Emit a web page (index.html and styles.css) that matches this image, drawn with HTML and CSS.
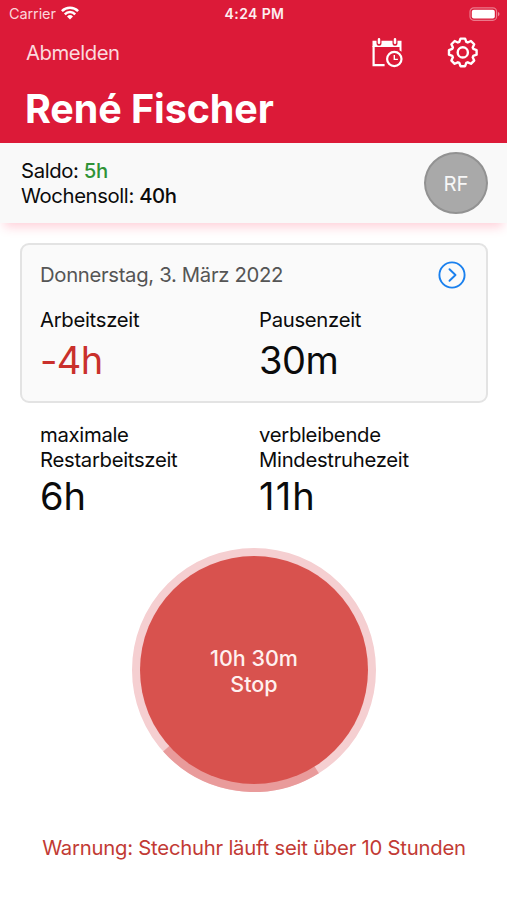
FILE: index.html
```html
<!DOCTYPE html>
<html lang="de">
<head>
<meta charset="utf-8">
<meta name="viewport" content="width=device-width, initial-scale=1">
<title>Stechuhr</title>
<link rel="stylesheet" href="styles.css">
</head>
<body>
<header class="header">
  <div class="status">
    <div class="carrier">
      <span>Carrier</span>
      <svg class="wifi" viewBox="0 0 18 14" width="18" height="14" fill="none" stroke="#fff" stroke-width="2.5">
        <path d="M.9 5.200a11.500 11.500 0 0 1 16.200 0"/>
        <path d="M3.800 8.300a7.300 7.300 0 0 1 10.400 0"/>
        <path d="M9 13.600 6 10.500a4.300 4.300 0 0 1 6 0z" fill="#fff" stroke="none"/>
      </svg>
    </div>
    <div class="clock">4:24 PM</div>
    <svg class="battery" viewBox="0 0 31 14" width="31" height="14">
      <rect x="1" y=".9" width="26.600" height="12.400" rx="3.800" fill="none" stroke="#fff" stroke-opacity=".42" stroke-width="1.200"/>
      <rect x="2.800" y="2.700" width="23" height="8.800" rx="2" fill="#fff"/>
      <path d="M29 5v4.200q1.500-.6 1.500-2.100T29 5z" fill="#fff" fill-opacity=".5"/>
    </svg>
  </div>
  <nav class="nav">
    <a class="logout">Abmelden</a>
    <div class="actions">
      <svg viewBox="0 0 32 32" width="32" height="32" fill="none" stroke="#fff">
        <path d="M2.600 9v19.200h11" stroke-width="2.200"/>
        <path d="M1.500 3.800h29v11l-2-1.600V10H1.500z" fill="#fff" stroke="none"/>
        <path d="M8 3.200v3M24 3.200v3" stroke="#dc1a38" stroke-width="5" stroke-linecap="round"/>
        <path d="M8 2.200v3.600M24 2.200v3.600" stroke-width="2.500" stroke-linecap="round"/>
        <circle cx="23.300" cy="22" r="7.200" stroke-width="2.200"/>
        <path d="M23.300 18v4.400h3.600" stroke-width="1.400"/>
      </svg>
      <svg viewBox="-16 -16 32 32" width="32" height="32" fill="none" stroke="#fff" stroke-width="2.400" stroke-linejoin="round">
        <g transform="translate(-.2 -.6)">
          <path d="M-3.500-10.500-2.300-13.800H2.300L3.500-10.500 4.950-9.900 8.130-11.380 11.380-8.130 9.900-4.950 10.500-3.500 13.800-2.300V2.300L10.500 3.500 9.900 4.950 11.380 8.130 8.130 11.380 4.950 9.900 3.500 10.500 2.300 13.800H-2.300L-3.500 10.500-4.950 9.900-8.130 11.380-11.380 8.130-9.900 4.950-10.500 3.500-13.800 2.300V-2.300L-10.500-3.500-9.900-4.950-11.380-8.130-8.130-11.380-4.950-9.900z"/>
          <circle r="5.100"/>
        </g>
      </svg>
    </div>
  </nav>
  <h1 class="name">René Fischer</h1>
</header>

<section class="summary">
  <div class="balance">
    <div>Saldo: <span class="positive">5h</span></div>
    <div>Wochensoll: <span class="target">40h</span></div>
  </div>
  <div class="avatar">RF</div>
</section>

<main class="content">
  <section class="day">
    <div class="day-head">
      <span class="date">Donnerstag, 3. März 2022</span>
      <svg viewBox="0 0 28 28" width="28" height="28" fill="none" stroke="#1a80ee" stroke-width="1.900">
        <circle cx="14" cy="14" r="12.600"/>
        <path d="M11.500 8.200l6 5.800-6 5.800" stroke-linecap="round" stroke-linejoin="round"/>
      </svg>
    </div>
    <div class="grid">
      <div><div class="label">Arbeitszeit</div><div class="value negative">-4h</div></div>
      <div><div class="label">Pausenzeit</div><div class="value minutes">30m</div></div>
    </div>
  </section>
  <section class="grid limits">
    <div><div class="label">maximale<br>Restarbeitszeit</div><div class="value">6h</div></div>
    <div><div class="label">verbleibende<br>Mindestruhezeit</div><div class="value rest">11h</div></div>
  </section>
  <button class="stop">
    <svg class="ring" viewBox="-122 -122 244 244" width="244" height="244" fill="none" stroke-width="9">
      <circle r="117.500" stroke="#f5cfd1"/>
      <path d="M62.500 99.500A117.500 117.500 0 0 1-87.500 78.400" stroke="#e99b9b"/>
      <circle r="114" fill="#d8524e"/>
    </svg>
    <span class="stop-text">10h 30m<br>Stop</span>
  </button>
  <p class="warning">Warnung: Stechuhr läuft seit über 10 Stunden</p>
</main>
</body>
</html>
```
FILE: styles.css
```css
* { box-sizing: border-box; }

body {
  margin: 0;
  width: 507px;
  height: 900px;
  overflow: hidden;
  background: #fff;
  color: #0b0b0b;
  font-family: Inter, "Liberation Sans", sans-serif;
  font-size: 20.3px;
  line-height: 24.6px;
}

.header {
  height: 143px;
  background: #dc1a38;
  color: #fff;
}

.status {
  display: grid;
  grid-template-columns: 1fr auto 1fr;
  align-items: center;
  height: 28px;
  padding: 0 7px 0 9px;
  font-size: 14.5px;
  line-height: 28px;
}

.carrier { display: flex; align-items: center; gap: 5px; color: #fbd5da; letter-spacing: -0.1px; }
.wifi { margin-top: -2px; }
.clock { font-weight: 600; font-size: 14px; letter-spacing: 0.4px; color: #fdeef0; }
.battery { justify-self: end; margin-top: -1px; }

.nav {
  display: flex;
  justify-content: space-between;
  align-items: center;
  height: 49px;
  padding: 0 28px 0 26px;
}

.logout { padding-top: 1px; color: #fbdade; letter-spacing: -0.45px; }
.actions { display: flex; gap: 44px; }

.name {
  margin: 0;
  padding-left: 25px;
  font-size: 39.5px;
  font-weight: 700;
  line-height: 64px;
  letter-spacing: -0.1px;
}

.summary {
  display: flex;
  justify-content: space-between;
  align-items: center;
  height: 80px;
  padding: 0 19px 0 21px;
  background: #f9f9f9;
  box-shadow: 0 8px 10px -4px rgba(255, 45, 85, 0.22);
}

.balance { padding-top: 1px; letter-spacing: -0.38px; }
.positive { color: #2f9337; font-weight: 500; }
.target { font-weight: 500; }

.avatar {
  width: 64px;
  height: 62px;
  border: 2px solid #929292;
  border-radius: 50%;
  background: #a9a9a9;
  color: #f7f7f7;
  line-height: 59px;
  text-align: center;
}

.content { padding: 20px 19px 0 20px; }

.day {
  height: 160px;
  padding: 16px 19px 0 18px;
  border: 2px solid #e3e3e3;
  border-radius: 9px;
  background: #fafafa;
}

.day-head {
  display: flex;
  justify-content: space-between;
  align-items: center;
  height: 28px;
  padding-right: 1px;
}

.date { padding-top: 1px; color: #555; letter-spacing: -0.32px; }

.grid { display: grid; grid-template-columns: 219px 1fr; }
.day .grid { margin-top: 19px; }
.limits { padding: 20px 20px 0; }

.label { letter-spacing: -0.3px; }
.value { margin-top: 1px; font-size: 38px; line-height: 46px; }
.day .value { margin-top: 4px; }
.negative { color: #c9302c; letter-spacing: -0.7px; }
.minutes { letter-spacing: -0.5px; }
.rest { letter-spacing: 1.2px; }

.stop {
  display: grid;
  place-items: center;
  width: 244px;
  height: 244px;
  margin: 29px auto 0;
  padding: 0;
  border: 0;
  background: none;
  color: #fff0ef;
  font: 500 21.5px/26px Inter, "Liberation Sans", sans-serif;
}

.ring, .stop-text { grid-area: 1 / 1; }
.stop-text { z-index: 1; padding-top: 1px; }

.warning {
  margin: 44px 0 0;
  text-align: center;
  color: #c23a34;
  letter-spacing: -0.23px;
}
```
